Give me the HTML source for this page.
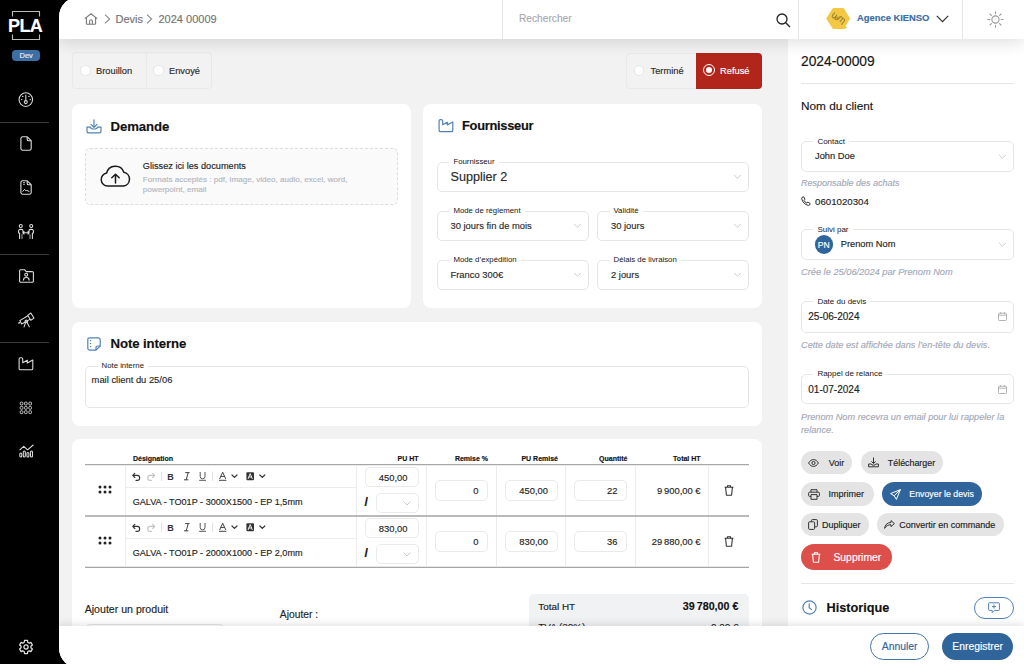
<!DOCTYPE html>
<html><head><meta charset="utf-8">
<style>
*{box-sizing:border-box;margin:0;padding:0}
html,body{width:1024px;height:664px;overflow:hidden;background:#000}
body{position:relative;font-family:"Liberation Sans",sans-serif;color:#161616}
.a{position:absolute}
.t{position:absolute;white-space:nowrap;line-height:1;-webkit-text-stroke:.15px currentColor}
.b{font-weight:bold}
.ic{position:absolute;overflow:visible}
#main{position:absolute;left:59px;top:-3px;width:980px;height:671px;border-radius:20px 0 0 20px;overflow:hidden;background:#f2f2f2}
#pg{position:absolute;left:-59px;top:3px;width:1024px;height:664px}
.card{position:absolute;background:#fff;border-radius:8px}
.fld{position:absolute;border:1px solid #e6e6e6;border-radius:5px;background:#fff}
.lbl{position:absolute;white-space:nowrap;line-height:1;background:#fff;padding:0 4px;font-size:8px;color:#161616}
.pill{position:absolute;border-radius:12px;background:#e4e4e4}
.help{font-style:italic;color:#a3a8b8}
</style></head><body>
<!-- SIDEBAR -->
<div id="sb" class="a" style="left:0;top:0;width:59px;height:664px;background:#000">
<svg class="ic" style="left:11px;top:10px" width="30" height="31" viewBox="0 0 30 31" fill="none" stroke="#bdbdbd" stroke-width="1.1"><path d="M1.5 6.5V1.5H28.5V6.5M1.5 24.5V29.5H28.5V24.5"/></svg>
<div class="t b" style="left:8px;top:16.8px;font-size:18px;color:#fff;letter-spacing:-0.6px">PLA</div>
<div class="a" style="left:12px;top:50px;width:28px;height:11px;border-radius:4px;background:#3b6fa6"></div>
<div class="t" style="left:19.5px;top:52px;font-size:7.5px;color:#e6eef7">Dev</div>
<div class="a" style="left:0;top:122px;width:49px;height:1px;background:#3a3a3a"></div>
<div class="a" style="left:0;top:254px;width:49px;height:1px;background:#3a3a3a"></div>
<div class="a" style="left:0;top:342px;width:49px;height:1px;background:#3a3a3a"></div>
<svg class="ic" style="left:18px;top:92px" width="16" height="16" viewBox="0 0 16 16" fill="none" stroke="#dcdcdc" stroke-width="1.05" stroke-linecap="round"><circle cx="7.8" cy="7.6" r="6.8"/><path d="M7.8 3V8.6"/><circle cx="7.8" cy="10.1" r="1.5"/><path d="M4.7 4.4h.1M11 4.4h-.1M3.6 7.6h.1M12.3 7.6h-.1" stroke-width="1.4"/></svg>
<svg class="ic" style="left:19.5px;top:136px" width="12" height="15" viewBox="0 0 12 15" fill="none" stroke="#dcdcdc" stroke-width="1.1" stroke-linejoin="round"><path d="M2.5 .8H7.3L11.2 4.7V12.6a1.6 1.6 0 0 1-1.6 1.6H2.5A1.6 1.6 0 0 1 .9 12.6V2.4A1.6 1.6 0 0 1 2.5 .8z"/><path d="M7.2 .9V3.4a1.3 1.3 0 0 0 1.3 1.3H11"/></svg>
<svg class="ic" style="left:19.5px;top:180px" width="12" height="15" viewBox="0 0 12 15" fill="none" stroke="#dcdcdc" stroke-width="1.1" stroke-linejoin="round"><path d="M2.5 .8H7.3L11.2 4.7V12.6a1.6 1.6 0 0 1-1.6 1.6H2.5A1.6 1.6 0 0 1 .9 12.6V2.4A1.6 1.6 0 0 1 2.5 .8z"/><path d="M7.2 .9V3.4a1.3 1.3 0 0 0 1.3 1.3H11"/><path d="M3.2 2.6h1.6M3.2 4.3h1.6M2.6 11.6L4.6 9.4 5.8 10.8 6.8 10.4 9.4 11.6" stroke-width="1"/></svg>
<svg class="ic" style="left:17px;top:223px" width="18" height="16" viewBox="0 0 18 16" fill="none" stroke="#dcdcdc" stroke-width="1.1" stroke-linecap="round" stroke-linejoin="round"><circle cx="3.8" cy="3" r="1.5"/><circle cx="14.2" cy="3" r="1.5"/><path d="M1.6 10V8a1.6 1.6 0 0 1 1.6-1.6H4.4A1.6 1.6 0 0 1 6 8V9M2.6 10V15.4M16.4 10V8a1.6 1.6 0 0 0-1.6-1.6H13.6A1.6 1.6 0 0 0 12 8V9M15.4 10V15.4M5.8 9.8H12.2M7 8.6L5.8 9.8 7 11M11 8.6L12.2 9.8 11 11"/><path d="M5 11.6V15.4M13 11.6V15.4" stroke="#9a9a9a"/></svg>
<svg class="ic" style="left:18.5px;top:268.5px" width="15" height="14" viewBox="0 0 15 14" fill="none" stroke="#dcdcdc" stroke-width="1.1" stroke-linejoin="round"><path d="M1.6 .7H5.6L7.2 2.6H13.2a1.2 1.2 0 0 1 1.2 1.2V12a1.2 1.2 0 0 1-1.2 1.2H1.8A1.2 1.2 0 0 1 .6 12V1.8A1.1 1.1 0 0 1 1.6 .7z"/><circle cx="7.2" cy="5.7" r="1.45"/><path d="M4.4 11.4a2.9 2.9 0 0 1 5.8 0"/></svg>
<svg class="ic" style="left:17.5px;top:311.5px" width="17" height="16" viewBox="0 0 17 16" fill="none" stroke="#dcdcdc" stroke-width="1.05" stroke-linecap="round" stroke-linejoin="round"><path d="M1.8 8.6L9.9 3.8M3.6 12L11.9 7.4M1.8 8.6L3.6 12M9.7 3.3L12.8 1 16 6.1 12.8 8.3z"/><path d="M.8 11.1L1.5 10.6" stroke-width="1.3"/><circle cx="8.3" cy="9.4" r="1.3"/><path d="M7.5 10.6L6.1 14.9M9.1 10.6L11.3 14.7"/></svg>
<svg class="ic" style="left:18px;top:356.5px" width="16" height="14" viewBox="0 0 16 14" fill="none" stroke="#dcdcdc" stroke-width="1.1" stroke-linejoin="round"><path d="M1.1 11.4V2a1.3 1.3 0 0 1 1.3-1.3H3.4A1.3 1.3 0 0 1 4.7 2V5.7L9.3 3.2V5.9L14.8 3V11.4a1.3 1.3 0 0 1-1.3 1.3H2.4a1.3 1.3 0 0 1-1.3-1.3z"/></svg>
<svg class="ic" style="left:19px;top:400.5px" width="14" height="14" viewBox="0 0 14 14" fill="none" stroke="#dcdcdc" stroke-width=".9"><rect x="1.2" y="1.1" width="2.7" height="2.9" rx="1"/><rect x="5.5" y="1.1" width="2.7" height="2.9" rx="1"/><rect x="9.8" y="1.1" width="2.7" height="2.9" rx="1"/><rect x="1.2" y="5.4" width="2.7" height="2.9" rx="1"/><rect x="5.5" y="5.4" width="2.7" height="2.9" rx="1"/><rect x="9.8" y="5.4" width="2.7" height="2.9" rx="1"/><rect x="1.2" y="9.7" width="2.7" height="2.9" rx="1"/><rect x="5.5" y="9.7" width="2.7" height="2.9" rx="1"/><rect x="9.8" y="9.7" width="2.7" height="2.9" rx="1"/></svg>
<svg class="ic" style="left:18.5px;top:444px" width="15" height="14" viewBox="0 0 15 14" fill="none" stroke="#dcdcdc" stroke-width="1.05" stroke-linecap="round" stroke-linejoin="round"><path d="M.8 5.8L4.8 2.4 8.6 5.8 14.2 1"/><rect x=".8" y="9" width="2" height="4" rx="1"/><rect x="4.3" y="6.9" width="2" height="6.1" rx="1"/><rect x="7.9" y="8.4" width="2" height="4.6" rx="1"/><rect x="11.5" y="6.9" width="2" height="6.1" rx="1"/></svg>
<svg class="ic" style="left:17.9px;top:639.2px" width="16" height="16" viewBox="0 0 16 16" fill="none" stroke="#e4e4e4" stroke-width="1.25" stroke-linejoin="round"><path d="M6.29 3.30 L6.49 1.47 L9.51 1.47 L9.71 3.30 L11.21 4.17 L12.90 3.43 L14.41 6.04 L12.92 7.13 L12.92 8.87 L14.41 9.96 L12.90 12.57 L11.21 11.83 L9.71 12.70 L9.51 14.53 L6.49 14.53 L6.29 12.70 L4.79 11.83 L3.10 12.57 L1.59 9.96 L3.08 8.87 L3.08 7.13 L1.59 6.04 L3.10 3.43 L4.79 4.17z"/><circle cx="8" cy="8" r="2.1"/></svg>
</div>
<div id="main"><div id="pg">
<!-- TOPBAR -->
<div class="a" style="left:59px;top:-3px;width:965px;height:42px;background:#fff;box-shadow:0 4px 16px rgba(0,0,0,.12);z-index:5">
<div style="position:absolute;left:-59px;top:3px;width:1024px;height:39px">
<svg class="ic" style="left:84px;top:12px" width="14" height="13" viewBox="0 0 14 13" fill="none" stroke="#7a7a7a" stroke-width="1.1" stroke-linejoin="round"><path d="M.8 6.6L7 1.7 13.2 6.6M2.4 5.4V11.4a.8.8 0 0 0 .8.8H10.8a.8.8 0 0 0 .8-.8V5.4M5.6 12.2V9.2a1.4 1.4 0 0 1 2.8 0V12.2"/></svg>
<svg class="ic" style="left:104px;top:14px" width="7" height="10" viewBox="0 0 7 10" fill="none" stroke="#888" stroke-width="1.1"><path d="M1 .7L5.6 5 1 9.3"/></svg>
<div class="t" style="left:115.5px;top:13.7px;font-size:11px;color:#737373">Devis</div>
<svg class="ic" style="left:146px;top:14px" width="7" height="10" viewBox="0 0 7 10" fill="none" stroke="#888" stroke-width="1.1"><path d="M1 .7L5.6 5 1 9.3"/></svg>
<div class="t" style="left:158.5px;top:13.7px;font-size:11px;color:#737373">2024 00009</div>
<div class="a" style="left:502px;top:0;width:1px;height:39px;background:#e6e6e6"></div>
<div class="t" style="left:519px;top:14.2px;font-size:10.2px;color:#a6a9b2">Rechercher</div>
<svg class="ic" style="left:776px;top:12.5px" width="15" height="15" viewBox="0 0 15 15" fill="none" stroke="#222" stroke-width="1.3"><circle cx="6" cy="6" r="5"/><path d="M9.7 9.7L14 14"/></svg>
<div class="a" style="left:798px;top:0;width:1px;height:39px;background:#e6e6e6"></div>
<svg class="ic" style="left:826px;top:8px" width="24" height="21" viewBox="0 0 24 21"><path d="M7.4 1H17.2L22.9 10.5 18.6 17.8 19.6 19.6 17.6 20H7.4L1.3 10.5z" fill="#f4c843" stroke="#f4c843" stroke-width="2" stroke-linejoin="round"/><g transform="translate(12.3 10.8) scale(1.22) rotate(38) translate(-11 -10.5)" fill="none" stroke="#9a8732" stroke-width=".85" stroke-linecap="round" stroke-linejoin="round"><path d="M5.6 8.6V11.2a1.2 1.2 0 0 0 2.4 0V8.6M8 11.2c0-1.6 2.6-1.6 2.4.2-.2 1.6-2.4 1.2-1.6-.6M10.6 8.8c.6 0 .6 2.4.6 2.4V8.8a1.2 1.2 0 0 1 2.4 0V11.4V8.8a1.2 1.2 0 0 1 2.4 0V12.4"/></g></svg>
<div class="t b" style="left:857px;top:13.3px;font-size:9.4px;color:#3a6ea5">Agence KIENSO</div>
<svg class="ic" style="left:936px;top:15px" width="13" height="8" viewBox="0 0 13 8" fill="none" stroke="#333" stroke-width="1.3"><path d="M.8 .9L6.5 6.6 12.2 .9"/></svg>
<div class="a" style="left:962px;top:0;width:1px;height:39px;background:#e6e6e6"></div>
<svg class="ic" style="left:986.5px;top:10.5px" width="17" height="17" viewBox="0 0 17 17" fill="none" stroke="#9a9a9a" stroke-width="1.1" stroke-linecap="round"><circle cx="8.5" cy="8.5" r="3.6"/><path d="M8.5 .8V2.8M8.5 14.2V16.2M.8 8.5H2.8M14.2 8.5H16.2M3 3L4.4 4.4M12.6 12.6L14 14M3 14L4.4 12.6M12.6 4.4L14 3"/></svg>
</div></div>
<!-- content -->
<!-- status group 1 -->
<div class="a" style="left:72px;top:52px;width:140px;height:36.5px;border:1px solid #e9e9e9;border-radius:4px"></div>
<div class="a" style="left:145.5px;top:53px;width:1px;height:35px;background:#e9e9e9"></div>
<div class="a" style="left:80px;top:65.3px;width:10.5px;height:10.5px;border-radius:50%;background:#fff;border:1px solid #e6e6e6"></div>
<div class="t" style="left:96px;top:66.6px;font-size:9.3px;color:#2a2a2a">Brouillon</div>
<div class="a" style="left:153px;top:65.3px;width:10.5px;height:10.5px;border-radius:50%;background:#fff;border:1px solid #e6e6e6"></div>
<div class="t" style="left:169px;top:66.6px;font-size:9.3px;color:#2a2a2a">Envoyé</div>
<!-- status group 2 -->
<div class="a" style="left:626px;top:52.5px;width:136px;height:36px;border:1px solid #e9e9e9;border-radius:4px"></div>
<div class="a" style="left:696px;top:52.5px;width:65.5px;height:36px;background:#b1251b;border-radius:0 4px 4px 0"></div>
<div class="a" style="left:633.5px;top:65.3px;width:10.5px;height:10.5px;border-radius:50%;background:#fff;border:1px solid #e6e6e6"></div>
<div class="t" style="left:650.5px;top:66.6px;font-size:9.3px;color:#2a2a2a">Terminé</div>
<div class="a" style="left:703.3px;top:64.3px;width:12px;height:12px;border-radius:50%;border:1.2px solid #fff"></div>
<div class="a" style="left:706.3px;top:67.3px;width:6px;height:6px;border-radius:50%;background:#fff"></div>
<div class="t" style="left:720px;top:66.6px;font-size:9.3px;color:#fff">Refusé</div>

<!-- DEMANDE CARD -->
<div class="card" style="left:72px;top:104px;width:339px;height:204px"></div>
<svg class="ic" style="left:85.5px;top:118.5px" width="16" height="15" viewBox="0 0 16 15" fill="none" stroke="#4f82b8" stroke-width="1.2" stroke-linecap="round" stroke-linejoin="round"><path d="M8 .8V8.2M5 5.4L8 8.4 11 5.4M1 8.2V12.2a1.6 1.6 0 0 0 1.6 1.6H13.4A1.6 1.6 0 0 0 15 12.2V8.2H11.4a3.4 1.8 0 0 1-6.8 0z"/></svg>
<div class="t b" style="left:110.5px;top:120.3px;font-size:13.2px;color:#111;letter-spacing:-0.1px">Demande</div>
<div class="a" style="left:85px;top:148px;width:313px;height:57px;border:1px dashed #dedede;border-radius:5px;background:#fafafa"></div>
<svg class="ic" style="left:100px;top:165px" width="31" height="22" viewBox="0 0 31 22" fill="none" stroke="#1a1a1a" stroke-width="1.5" stroke-linecap="round" stroke-linejoin="round"><path d="M7.5 21A6.5 6.5 0 0 1 6.6 8.1 9 9 0 0 1 23.8 7.2 7 7 0 0 1 23.5 21z"/><path d="M15.5 18V9.6M11.8 12.8L15.5 9.2 19.2 12.8"/></svg>
<div class="t" style="left:142.8px;top:162.1px;font-size:9.2px;color:#1e1e1e">Glissez ici les documents</div>
<div class="t" style="left:142.8px;top:174.6px;font-size:8.1px;color:#b3b7c2;line-height:10px;white-space:normal;width:215px">Formats acceptés : pdf, image, video, audio, excel, word, powerpoint, email</div>

<!-- FOURNISSEUR CARD -->
<div class="card" style="left:423px;top:104px;width:339px;height:204px"></div>
<svg class="ic" style="left:437.5px;top:119px" width="16" height="14" viewBox="0 0 16 14" fill="none" stroke="#4f82b8" stroke-width="1.2" stroke-linejoin="round"><path d="M1.1 11.4V2a1.3 1.3 0 0 1 1.3-1.3H3.4A1.3 1.3 0 0 1 4.7 2V5.7L9.3 3.2V5.9L14.8 3V11.4a1.3 1.3 0 0 1-1.3 1.3H2.4a1.3 1.3 0 0 1-1.3-1.3z"/></svg>
<div class="t b" style="left:462px;top:120.3px;font-size:12.9px;color:#111;letter-spacing:-0.3px">Fournisseur</div>
<div class="fld" style="left:436.5px;top:161.5px;width:312.5px;height:30.5px"></div>
<div class="lbl" style="left:449.4px;top:158.2px;font-size:7.8px">Fournisseur</div>
<div class="t" style="left:450.5px;top:171.1px;font-size:12.6px;color:#2a2a2a">Supplier 2</div>
<svg class="ic chev" style="left:733px;top:174px" width="9" height="6" viewBox="0 0 9 6" fill="none" stroke="#c6c6c6" stroke-width=".9"><path d="M1.2 1L4.5 4.3 7.8 1"/></svg>
<div class="fld" style="left:436.5px;top:210.5px;width:152px;height:30.5px"></div>
<div class="lbl" style="left:449.4px;top:207.1px;font-size:7.8px">Mode de règlement</div>
<div class="t" style="left:450.5px;top:220.8px;font-size:9.4px;color:#2a2a2a">30 jours fin de mois</div>
<svg class="ic chev" style="left:573px;top:222.5px" width="9" height="6" viewBox="0 0 9 6" fill="none" stroke="#c6c6c6" stroke-width=".9"><path d="M1.2 1L4.5 4.3 7.8 1"/></svg>
<div class="fld" style="left:597px;top:210.5px;width:152px;height:30.5px"></div>
<div class="lbl" style="left:609.5px;top:207.1px;font-size:7.8px">Validité</div>
<div class="t" style="left:611px;top:220.8px;font-size:9.4px;color:#2a2a2a">30 jours</div>
<svg class="ic chev" style="left:733px;top:222.5px" width="9" height="6" viewBox="0 0 9 6" fill="none" stroke="#c6c6c6" stroke-width=".9"><path d="M1.2 1L4.5 4.3 7.8 1"/></svg>
<div class="fld" style="left:436.5px;top:259.5px;width:152px;height:30.5px"></div>
<div class="lbl" style="left:449.4px;top:256.1px;font-size:7.8px">Mode d’expédition</div>
<div class="t" style="left:450.5px;top:269.8px;font-size:9.4px;color:#2a2a2a">Franco 300€</div>
<svg class="ic chev" style="left:573px;top:271.5px" width="9" height="6" viewBox="0 0 9 6" fill="none" stroke="#c6c6c6" stroke-width=".9"><path d="M1.2 1L4.5 4.3 7.8 1"/></svg>
<div class="fld" style="left:597px;top:259.5px;width:152px;height:30.5px"></div>
<div class="lbl" style="left:609.5px;top:256.1px;font-size:7.8px">Délais de livraison</div>
<div class="t" style="left:611px;top:269.8px;font-size:9.4px;color:#2a2a2a">2 jours</div>
<svg class="ic chev" style="left:733px;top:271.5px" width="9" height="6" viewBox="0 0 9 6" fill="none" stroke="#c6c6c6" stroke-width=".9"><path d="M1.2 1L4.5 4.3 7.8 1"/></svg>

<!-- NOTE CARD -->
<div class="card" style="left:72px;top:321.5px;width:690px;height:104px"></div>
<svg class="ic" style="left:86.5px;top:336.5px" width="14" height="14" viewBox="0 0 14 14" fill="none" stroke="#4f82b8" stroke-width="1.2" stroke-linejoin="round"><path d="M2.4.8H11.2a2 2 0 0 1 2 2V9L9 13.2H2.8a2 2 0 0 1-2-2V2.4A1.6 1.6 0 0 1 2.4.8z"/><path d="M13.2 9H10.6A1.6 1.6 0 0 0 9 10.6V13.2"/><path d="M3.4 3.6h.3M3.4 6.6h.3M3.4 9.6h.3" stroke-width="1.3" stroke-linecap="round"/></svg>
<div class="t b" style="left:110.5px;top:337px;font-size:13.2px;color:#111;letter-spacing:-0.1px">Note interne</div>
<div class="fld" style="left:85px;top:366px;width:664px;height:41.5px"></div>
<div class="lbl" style="left:97.5px;top:361.8px;font-size:7.8px">Note interne</div>
<div class="t" style="left:91.6px;top:374.6px;font-size:9.4px;color:#2a2a2a">mail client du 25/06</div>

<!-- PRODUCTS CARD -->
<div class="card" style="left:72px;top:439px;width:690px;height:240px"></div>
<div class="t b" style="left:133px;top:454.6px;font-size:7px;color:#111">Désignation</div>
<div class="t b" style="left:300px;top:454.6px;width:118.5px;text-align:right;font-size:7px;color:#111">PU HT</div>
<div class="t b" style="left:400px;top:454.6px;width:88px;text-align:right;font-size:7px;color:#111">Remise %</div>
<div class="t b" style="left:470px;top:454.6px;width:88px;text-align:right;font-size:7px;color:#111">PU Remisé</div>
<div class="t b" style="left:540px;top:454.6px;width:87.5px;text-align:right;font-size:7px;color:#111">Quantité</div>
<div class="t b" style="left:610px;top:454.6px;width:90.6px;text-align:right;font-size:7px;color:#111">Total HT</div>
<div class="a" style="left:85px;top:464px;width:664px;height:1px;background:#a6a6a6"></div><div class="a" style="left:85px;top:465px;width:664px;height:1px;background:#ececec"></div>

<div class="a" style="left:125px;top:465.5px;width:1px;height:51px;background:#ececec"></div>
<div class="a" style="left:355.5px;top:465.5px;width:1px;height:51px;background:#ececec"></div>
<div class="a" style="left:426px;top:465.5px;width:1px;height:51px;background:#ececec"></div>
<div class="a" style="left:495.5px;top:465.5px;width:1px;height:51px;background:#ececec"></div>
<div class="a" style="left:565px;top:465.5px;width:1px;height:51px;background:#ececec"></div>
<div class="a" style="left:635px;top:465.5px;width:1px;height:51px;background:#ececec"></div>
<div class="a" style="left:708px;top:465.5px;width:1px;height:51px;background:#ececec"></div>
<div class="a" style="left:126px;top:487.0px;width:229.5px;height:1px;background:#ececec"></div>
<svg class="ic" style="left:97.5px;top:485.0px" width="14" height="9" viewBox="0 0 14 9" fill="#222"><circle cx="2" cy="2" r="1.5"/><circle cx="7" cy="2" r="1.5"/><circle cx="12" cy="2" r="1.5"/><circle cx="2" cy="7" r="1.5"/><circle cx="7" cy="7" r="1.5"/><circle cx="12" cy="7" r="1.5"/></svg>
<svg class="ic" style="left:131px;top:471.0px" width="140" height="10" viewBox="0 0 140 10" fill="none" stroke-width="1.1" stroke-linecap="round" stroke-linejoin="round">
 <path d="M1.8 4.4h4.4a2.5 2.5 0 0 1 0 5H5M3.8 2.3L1.7 4.4 3.8 6.5" stroke="#333"/>
 <path d="M23.6 4.4h-4.4a2.5 2.5 0 0 0 0 5H20.4M21.6 2.3L23.7 4.4 21.6 6.5" stroke="#c4c4c4"/>
 <path d="M30.6 1V9.6" stroke="#e0e0e0" stroke-width="1"/>
 <text x="36.2" y="8.6" font-family="Liberation Sans" font-weight="bold" font-size="9" fill="#333" stroke="none">B</text>
 <path d="M54.6 1.6h3.6M53.4 8.8h3.6M57.2 1.6L55.2 8.8" stroke="#444" stroke-width="1"/>
 <path d="M69.2 1.4V5.4a2.4 2.4 0 0 0 4.8 0V1.4M68.6 9.3h6" stroke="#555" stroke-width="1"/>
 <path d="M81.6 1V9.6" stroke="#e0e0e0" stroke-width="1"/>
 <path d="M88.8 7.6L91.7 1.2 94.6 7.6M89.8 5.4h3.8M88.4 9.3h6.6" stroke="#444" stroke-width="1"/>
 <path d="M101 4L103.5 6.4 106 4" stroke="#333" stroke-width="1.2"/>
 <rect x="115.4" y="1.2" width="7.6" height="8" rx="1" fill="#333" stroke="none"/>
 <path d="M117.2 7.6L119.2 2.6 121.2 7.6M117.9 6h2.6" stroke="#fff" stroke-width=".9"/>
 <path d="M128.8 4L131.3 6.4 133.8 4" stroke="#333" stroke-width="1.2"/>
</svg>
<div class="t" style="left:132.7px;top:498.4px;font-size:9.1px;color:#1e1e1e">GALVA - TO01P - 3000X1500 - EP 1,5mm</div>
<div class="fld" style="left:364.5px;top:467.2px;width:54px;height:20px;border-color:#eaeaea"></div>
<div class="t" style="left:364.5px;top:473.1px;width:43px;text-align:right;font-size:9.4px;color:#1e1e1e">450,00</div>
<div class="t b" style="left:364.5px;top:495.7px;font-size:12.5px;color:#111">/</div>
<div class="fld" style="left:375.5px;top:493.2px;width:43px;height:20px;border-color:#eaeaea"></div>
<svg class="ic" style="left:403px;top:500.7px" width="8" height="5" viewBox="0 0 8 5" fill="none" stroke="#c4c4c4" stroke-width=".9"><path d="M.6 .6L4 4 7.4 .6"/></svg>
<div class="fld" style="left:435px;top:480.0px;width:53px;height:20.5px;border-color:#eaeaea"></div>
<div class="t" style="left:435px;top:486.1px;width:43.5px;text-align:right;font-size:9.4px;color:#1e1e1e">0</div>
<div class="fld" style="left:504.5px;top:480.0px;width:53px;height:20.5px;border-color:#eaeaea"></div>
<div class="t" style="left:504.5px;top:486.1px;width:43.5px;text-align:right;font-size:9.4px;color:#1e1e1e">450,00</div>
<div class="fld" style="left:574px;top:480.0px;width:53px;height:20.5px;border-color:#eaeaea"></div>
<div class="t" style="left:574px;top:486.1px;width:43.5px;text-align:right;font-size:9.4px;color:#1e1e1e">22</div>
<div class="t" style="left:600px;top:486.1px;width:100.6px;text-align:right;font-size:9.4px;color:#1e1e1e;letter-spacing:-0.1px">9&#8239;900,00 €</div>
<svg class="ic" style="left:724px;top:485.0px" width="10" height="11" viewBox="0 0 10 11" fill="none" stroke="#333" stroke-width="1.1" stroke-linejoin="round"><path d="M.6 2.2H9.4M3.4 2V.8H6.6V2M1.6 2.3L2.4 10.2H7.6L8.4 2.3"/></svg>

<div class="a" style="left:85px;top:515px;width:664px;height:2px;background:#b9b9b9"></div>

<div class="a" style="left:125px;top:516.5px;width:1px;height:51px;background:#ececec"></div>
<div class="a" style="left:355.5px;top:516.5px;width:1px;height:51px;background:#ececec"></div>
<div class="a" style="left:426px;top:516.5px;width:1px;height:51px;background:#ececec"></div>
<div class="a" style="left:495.5px;top:516.5px;width:1px;height:51px;background:#ececec"></div>
<div class="a" style="left:565px;top:516.5px;width:1px;height:51px;background:#ececec"></div>
<div class="a" style="left:635px;top:516.5px;width:1px;height:51px;background:#ececec"></div>
<div class="a" style="left:708px;top:516.5px;width:1px;height:51px;background:#ececec"></div>
<div class="a" style="left:126px;top:538.0px;width:229.5px;height:1px;background:#ececec"></div>
<svg class="ic" style="left:97.5px;top:536.0px" width="14" height="9" viewBox="0 0 14 9" fill="#222"><circle cx="2" cy="2" r="1.5"/><circle cx="7" cy="2" r="1.5"/><circle cx="12" cy="2" r="1.5"/><circle cx="2" cy="7" r="1.5"/><circle cx="7" cy="7" r="1.5"/><circle cx="12" cy="7" r="1.5"/></svg>
<svg class="ic" style="left:131px;top:522.0px" width="140" height="10" viewBox="0 0 140 10" fill="none" stroke-width="1.1" stroke-linecap="round" stroke-linejoin="round">
 <path d="M1.8 4.4h4.4a2.5 2.5 0 0 1 0 5H5M3.8 2.3L1.7 4.4 3.8 6.5" stroke="#333"/>
 <path d="M23.6 4.4h-4.4a2.5 2.5 0 0 0 0 5H20.4M21.6 2.3L23.7 4.4 21.6 6.5" stroke="#c4c4c4"/>
 <path d="M30.6 1V9.6" stroke="#e0e0e0" stroke-width="1"/>
 <text x="36.2" y="8.6" font-family="Liberation Sans" font-weight="bold" font-size="9" fill="#333" stroke="none">B</text>
 <path d="M54.6 1.6h3.6M53.4 8.8h3.6M57.2 1.6L55.2 8.8" stroke="#444" stroke-width="1"/>
 <path d="M69.2 1.4V5.4a2.4 2.4 0 0 0 4.8 0V1.4M68.6 9.3h6" stroke="#555" stroke-width="1"/>
 <path d="M81.6 1V9.6" stroke="#e0e0e0" stroke-width="1"/>
 <path d="M88.8 7.6L91.7 1.2 94.6 7.6M89.8 5.4h3.8M88.4 9.3h6.6" stroke="#444" stroke-width="1"/>
 <path d="M101 4L103.5 6.4 106 4" stroke="#333" stroke-width="1.2"/>
 <rect x="115.4" y="1.2" width="7.6" height="8" rx="1" fill="#333" stroke="none"/>
 <path d="M117.2 7.6L119.2 2.6 121.2 7.6M117.9 6h2.6" stroke="#fff" stroke-width=".9"/>
 <path d="M128.8 4L131.3 6.4 133.8 4" stroke="#333" stroke-width="1.2"/>
</svg>
<div class="t" style="left:132.7px;top:549.4px;font-size:9.1px;color:#1e1e1e">GALVA - TO01P - 2000X1000 - EP 2,0mm</div>
<div class="fld" style="left:364.5px;top:518.2px;width:54px;height:20px;border-color:#eaeaea"></div>
<div class="t" style="left:364.5px;top:524.1px;width:43px;text-align:right;font-size:9.4px;color:#1e1e1e">830,00</div>
<div class="t b" style="left:364.5px;top:546.7px;font-size:12.5px;color:#111">/</div>
<div class="fld" style="left:375.5px;top:544.2px;width:43px;height:20px;border-color:#eaeaea"></div>
<svg class="ic" style="left:403px;top:551.7px" width="8" height="5" viewBox="0 0 8 5" fill="none" stroke="#c4c4c4" stroke-width=".9"><path d="M.6 .6L4 4 7.4 .6"/></svg>
<div class="fld" style="left:435px;top:531.0px;width:53px;height:20.5px;border-color:#eaeaea"></div>
<div class="t" style="left:435px;top:537.1px;width:43.5px;text-align:right;font-size:9.4px;color:#1e1e1e">0</div>
<div class="fld" style="left:504.5px;top:531.0px;width:53px;height:20.5px;border-color:#eaeaea"></div>
<div class="t" style="left:504.5px;top:537.1px;width:43.5px;text-align:right;font-size:9.4px;color:#1e1e1e">830,00</div>
<div class="fld" style="left:574px;top:531.0px;width:53px;height:20.5px;border-color:#eaeaea"></div>
<div class="t" style="left:574px;top:537.1px;width:43.5px;text-align:right;font-size:9.4px;color:#1e1e1e">36</div>
<div class="t" style="left:600px;top:537.1px;width:100.6px;text-align:right;font-size:9.4px;color:#1e1e1e;letter-spacing:-0.1px">29&#8239;880,00 €</div>
<svg class="ic" style="left:724px;top:536.0px" width="10" height="11" viewBox="0 0 10 11" fill="none" stroke="#333" stroke-width="1.1" stroke-linejoin="round"><path d="M.6 2.2H9.4M3.4 2V.8H6.6V2M1.6 2.3L2.4 10.2H7.6L8.4 2.3"/></svg>

<div class="a" style="left:85px;top:567px;width:664px;height:1px;background:#a6a6a6"></div><div class="a" style="left:85px;top:566px;width:664px;height:1px;background:#e6e6e6"></div>
<div class="t" style="left:84.7px;top:604.2px;font-size:10.6px;color:#1e1e1e">Ajouter un produit</div>
<div class="a" style="left:86px;top:624px;width:138px;height:10px;border:1px solid #e4e4e4;border-radius:4px"></div>
<div class="t" style="left:279.8px;top:610.3px;font-size:10.3px;color:#1e1e1e">Ajouter :</div>
<div class="a" style="left:528.5px;top:594px;width:220.5px;height:60px;background:#f1f2f4;border-radius:5px"></div>
<div class="t" style="left:538.3px;top:601.6px;font-size:9.9px;color:#222">Total HT</div>
<div class="t b" style="left:600px;top:601.4px;width:138.4px;text-align:right;font-size:10.7px;color:#111;letter-spacing:-0.2px">39&#8239;780,00 €</div>
<div class="t" style="left:538.3px;top:622px;font-size:9.9px;color:#222">TVA (20%)</div>
<div class="t" style="left:600px;top:622px;width:138.4px;text-align:right;font-size:9.9px;color:#222">0,00 €</div>
<!-- right panel -->
<div class="a" style="left:788px;top:39px;width:236px;height:600px;background:#fff"></div>
<div class="t" style="left:801px;top:55.4px;font-size:13.8px;color:#161616">2024-00009</div>
<div class="a" style="left:801px;top:83px;width:213px;height:1px;background:#e6e6e6"></div>
<div class="t" style="left:801px;top:101.2px;font-size:11.8px;color:#161616">Nom du client</div>

<div class="fld" style="left:801px;top:141px;width:212.5px;height:31px"></div>
<div class="lbl" style="left:813.4px;top:137.6px;font-size:8px">Contact</div>
<div class="t" style="left:815px;top:152.3px;font-size:9.3px;color:#222">John Doe</div>
<svg class="ic chev" style="left:997.5px;top:153.5px" width="9" height="6" viewBox="0 0 9 6" fill="none" stroke="#c6c6c6" stroke-width=".9"><path d="M1.2 1L4.5 4.3 7.8 1"/></svg>
<div class="t help" style="left:801px;top:179.4px;font-size:9px">Responsable des achats</div>
<svg class="ic" style="left:801px;top:196px" width="10" height="10" viewBox="0 0 10 10" fill="none" stroke="#333" stroke-width="1" stroke-linejoin="round"><path d="M2.6.8L4 3.2 3 4.3C3.6 5.6 4.5 6.5 5.8 7.1L6.9 6.1 9.2 7.5 8.6 9A1.3 1.3 0 0 1 7.4 9.4C4.2 8.9 1.2 5.9.7 2.7A1.3 1.3 0 0 1 1.1 1.4z"/></svg>
<div class="t" style="left:815px;top:196.6px;font-size:9.7px;color:#1a1a1a;-webkit-text-stroke:.12px #1a1a1a">0601020304</div>

<div class="fld" style="left:801px;top:229px;width:212.5px;height:31px"></div>
<div class="lbl" style="left:813.4px;top:225.6px;font-size:8px">Suivi par</div>
<div class="a" style="left:814.7px;top:235.3px;width:18.3px;height:18.3px;border-radius:50%;background:#30659c"></div>
<div class="t" style="left:814.7px;top:240.8px;width:18.3px;text-align:center;font-size:8.6px;color:#fff">PN</div>
<div class="t" style="left:840.7px;top:240.4px;font-size:9.3px;color:#222">Prenom Nom</div>
<svg class="ic chev" style="left:997.5px;top:241.5px" width="9" height="6" viewBox="0 0 9 6" fill="none" stroke="#c6c6c6" stroke-width=".9"><path d="M1.2 1L4.5 4.3 7.8 1"/></svg>
<div class="t help" style="left:801px;top:267.8px;font-size:9.25px">Crée le 25/06/2024 par Prenom Nom</div>

<div class="fld" style="left:801px;top:301px;width:212.5px;height:31.5px"></div>
<div class="lbl" style="left:813.4px;top:297.6px;font-size:8px">Date du devis</div>
<div class="t" style="left:808.3px;top:312.1px;font-size:10px;color:#222">25-06-2024</div>
<svg class="ic" style="left:997.5px;top:312px" width="9" height="9" viewBox="0 0 9 9" fill="none" stroke="#aaa" stroke-width=".9"><rect x=".5" y="1.2" width="8" height="7.3" rx=".8"/><path d="M.5 3.2h8M2.5.3v1.6M6.5.3v1.6"/></svg>
<div class="t help" style="left:801px;top:340.6px;font-size:9.2px">Cette date est affichée dans l’en-tête du devis.</div>

<div class="fld" style="left:801px;top:373.7px;width:212.5px;height:30.8px"></div>
<div class="lbl" style="left:813.4px;top:370.3px;font-size:8px">Rappel de relance</div>
<div class="t" style="left:808.3px;top:385.1px;font-size:10px;color:#222">01-07-2024</div>
<svg class="ic" style="left:997.5px;top:385px" width="9" height="9" viewBox="0 0 9 9" fill="none" stroke="#aaa" stroke-width=".9"><rect x=".5" y="1.2" width="8" height="7.3" rx=".8"/><path d="M.5 3.2h8M2.5.3v1.6M6.5.3v1.6"/></svg>
<div class="t help" style="left:801px;top:411px;font-size:9.2px;line-height:13px;white-space:normal;width:212px">Prenom Nom recevra un email pour lui rappeler la relance.</div>

<!-- action buttons -->
<div class="pill" style="left:801px;top:451.4px;width:51.4px;height:23px"></div>
<svg class="ic" style="left:808px;top:459px" width="11" height="8" viewBox="0 0 11 8" fill="none" stroke="#333" stroke-width="1"><path d="M.6 4C2 1.6 3.6.6 5.5.6S9 1.6 10.4 4C9 6.4 7.4 7.4 5.5 7.4S2 6.4.6 4z"/><circle cx="5.5" cy="4" r="1.6"/></svg>
<div class="t" style="left:828.8px;top:458.6px;font-size:9px;color:#222">Voir</div>
<div class="pill" style="left:860.8px;top:451.4px;width:82px;height:23px"></div>
<svg class="ic" style="left:867.5px;top:457px" width="11" height="11" viewBox="0 0 11 11" fill="none" stroke="#333" stroke-width="1" stroke-linejoin="round"><path d="M5.5.5V6.4M3.4 4.4L5.5 6.5 7.6 4.4M.6 7V9.8H10.4V7H7.6a2.1 1.2 0 0 1-4.2 0z"/></svg>
<div class="t" style="left:887.8px;top:458.6px;font-size:8.9px;color:#222">Télécharger</div>

<div class="pill" style="left:801px;top:482.2px;width:73.1px;height:23.4px"></div>
<svg class="ic" style="left:808px;top:488.5px" width="12" height="11" viewBox="0 0 12 11" fill="none" stroke="#333" stroke-width="1" stroke-linejoin="round"><path d="M3 3.2V.7H9V3.2M3 7.4H1.6A1 1 0 0 1 .6 6.4V4.2a1 1 0 0 1 1-1H10.4a1 1 0 0 1 1 1V6.4a1 1 0 0 1-1 1H9M3 5.6H9V10.3H3z"/></svg>
<div class="t" style="left:828.4px;top:489.6px;font-size:9px;color:#222">Imprimer</div>
<div class="pill" style="left:882.1px;top:482.2px;width:100.3px;height:23.4px;background:#30659c"></div>
<svg class="ic" style="left:889.5px;top:488.5px" width="11" height="11" viewBox="0 0 11 11" fill="none" stroke="#fff" stroke-width="1" stroke-linejoin="round"><path d="M10.4.6L.6 4.6 4.2 6.8 6.4 10.4z"/><path d="M4.2 6.8L10.4.6"/></svg>
<div class="t" style="left:909.3px;top:489.6px;font-size:8.8px;color:#fff">Envoyer le devis</div>

<div class="pill" style="left:801px;top:513.1px;width:67.8px;height:23.4px"></div>
<svg class="ic" style="left:807.5px;top:519px" width="10" height="11" viewBox="0 0 10 11" fill="none" stroke="#333" stroke-width="1" stroke-linejoin="round"><path d="M3.4 2.6V1.6a1 1 0 0 1 1-1H8.4a1 1 0 0 1 1 1V6.8a1 1 0 0 1-1 1H6.6"/><rect x=".6" y="2.8" width="6" height="7.6" rx="1"/></svg>
<div class="t" style="left:822px;top:521.4px;font-size:9px;color:#222">Dupliquer</div>
<div class="pill" style="left:876.8px;top:513.1px;width:126.9px;height:23.4px"></div>
<svg class="ic" style="left:884px;top:520px" width="11" height="9" viewBox="0 0 11 9" fill="none" stroke="#333" stroke-width="1" stroke-linejoin="round"><path d="M7 .6L10.4 3.6 7 6.6V4.8C4 4.6 2.2 5.8.6 8.4 1 5 3 2.6 7 2.4z"/></svg>
<div class="t" style="left:899.2px;top:521.4px;font-size:9px;color:#222">Convertir en commande</div>

<div class="pill" style="left:801px;top:544.4px;width:91.1px;height:25.6px;border-radius:13px;background:#dd4f4a"></div>
<svg class="ic" style="left:810.5px;top:552px" width="10" height="11" viewBox="0 0 10 11" fill="none" stroke="#fff" stroke-width="1.1" stroke-linejoin="round"><path d="M.6 2.2H9.4M3.4 2V.8H6.6V2M1.6 2.3L2.4 10.2H7.6L8.4 2.3"/></svg>
<div class="t" style="left:833.4px;top:553.2px;font-size:10.4px;color:#fff">Supprimer</div>

<div class="a" style="left:801px;top:583px;width:212.5px;height:1px;background:#e6e6e6"></div>
<svg class="ic" style="left:802px;top:600.2px" width="15" height="15" viewBox="0 0 15 15" fill="none" stroke="#4f82b8" stroke-width="1.2" stroke-linecap="round"><circle cx="7.5" cy="7.5" r="6.6"/><path d="M7.2 3.8V7.6L9.6 9.6"/></svg>
<div class="t b" style="left:826.6px;top:601.8px;font-size:12.7px;color:#111">Historique</div>
<div class="a" style="left:973.5px;top:596.7px;width:40px;height:22px;border:1px solid #4f82b8;border-radius:11px"></div>
<svg class="ic" style="left:987.5px;top:601.5px" width="12" height="12" viewBox="0 0 12 12" fill="none" stroke="#4f82b8" stroke-width="1" stroke-linejoin="round"><path d="M1.4.8H10.6a.8.8 0 0 1 .8.8V7.6a.8.8 0 0 1-.8.8H6.4L4.2 10.6V8.4H1.4a.8.8 0 0 1-.8-.8V1.6a.8.8 0 0 1 .8-.8z"/><path d="M6 2.6V6.6M4 4.6H8"/></svg>
<!-- bottom bar -->
<div class="a" style="left:59px;top:626px;width:965px;height:50px;background:#fff;box-shadow:0 -2px 8px rgba(0,0,0,.11);z-index:5">
<div style="position:absolute;left:-59px;top:-626px;width:1024px;height:664px">
<div class="a" style="left:870.4px;top:632.8px;width:58.6px;height:27.2px;border:1px solid #3f74ab;border-radius:14px"></div>
<div class="t" style="left:870.4px;top:642.3px;width:58.6px;text-align:center;font-size:10.4px;color:#30659c">Annuler</div>
<div class="a" style="left:941.8px;top:632.8px;width:71.7px;height:27.2px;border-radius:14px;background:#30659c"></div>
<div class="t" style="left:941.8px;top:641.6px;width:71.7px;text-align:center;font-size:10.4px;color:#fff">Enregistrer</div>
</div></div>
</div></div>
</body></html>
